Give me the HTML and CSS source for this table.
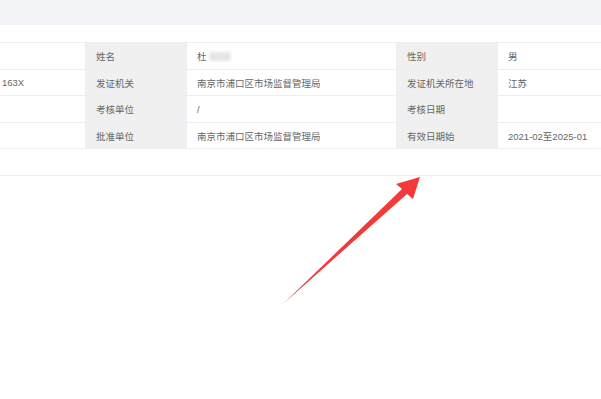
FILE: index.html
```html
<!DOCTYPE html>
<html lang="zh">
<head>
<meta charset="utf-8">
<link rel="stylesheet" href="styles.css">
</head>
<body>
<div class="topband"></div>
<div class="content">
  <div class="grid">
    <div class="c v"></div>
    <div class="c l">姓名</div>
    <div class="c v">杜<span class="blur"></span></div>
    <div class="c l">性别</div>
    <div class="c v last">男</div>

    <div class="c v first">163X</div>
    <div class="c l">发证机关</div>
    <div class="c v">南京市浦口区市场监督管理局</div>
    <div class="c l">发证机关所在地</div>
    <div class="c v last">江苏</div>

    <div class="c v"></div>
    <div class="c l">考核单位</div>
    <div class="c v">/</div>
    <div class="c l">考核日期</div>
    <div class="c v last"></div>

    <div class="c v"></div>
    <div class="c l">批准单位</div>
    <div class="c v">南京市浦口区市场监督管理局</div>
    <div class="c l">有效日期始</div>
    <div class="c v last">2021-02至2025-01</div>
  </div>
  <div class="footer"></div>
</div>
<svg class="arrow" width="601" height="399" viewBox="0 0 601 399">
  <polygon points="283,304 402,189 396,184 420,177 413,199 407,194" fill="#f23a3a"/>
</svg>
</body>
</html>
```
FILE: styles.css
```css
html, body {
  margin: 0;
  padding: 0;
  background: #fff;
  width: 601px;
  height: 399px;
  overflow: hidden;
  font-family: "Liberation Sans", "Noto Sans CJK SC", sans-serif;
  font-size: 9.5px;
  color: #666;
}
.topband {
  height: 25px;
  background: #f2f4f8;
}
.content {
  padding-top: 17px;
}
.grid {
  display: grid;
  grid-template-columns: 86px 101px 210px 101px 104px;
  grid-template-rows: 27px 26px 27px 26px;
  border-top: 1px solid #ebeef5;
}
.c {
  box-sizing: border-box;
  border-bottom: 1px solid #ebeef5;
  border-right: 1px solid #ebeef5;
  display: flex;
  align-items: center;
  padding-left: 10px;
  white-space: nowrap;
  overflow: hidden;
}
.c.first {
  padding-left: 2px;
}
.c.last {
  border-right: none;
}
.l {
  background: #f0f0f0;
}
.v {
  background: #fff;
}
.blur {
  display: inline-block;
  width: 22px;
  height: 9px;
  margin-left: 2px;
  background: #e6e6e8;
  border-radius: 4px;
  filter: blur(1.5px);
}
.footer {
  height: 26px;
  border-bottom: 1px solid #ebeef5;
}
.arrow {
  position: absolute;
  left: 0;
  top: 0;
  pointer-events: none;
}
```
